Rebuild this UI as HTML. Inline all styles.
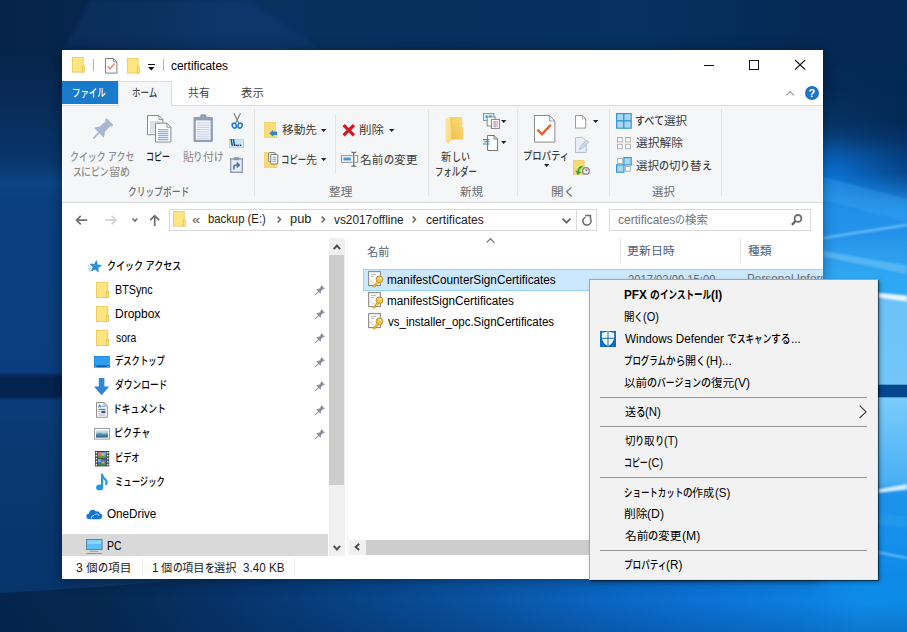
<!DOCTYPE html>
<html lang="ja"><head><meta charset="utf-8"><title>certificates</title>
<style>
html,body{margin:0;padding:0}
body{width:907px;height:632px;overflow:hidden;position:relative;background:#0a3568;font-family:"Liberation Sans","Noto Sans CJK JP",sans-serif;font-size:12px;font-weight:500}
.t{position:absolute;white-space:pre;height:20px;line-height:20px;transform-origin:0 50%;display:block}
.u{display:inline-block;white-space:pre;height:20px;line-height:20px;transform-origin:0 50%;vertical-align:baseline}
.r{position:absolute}
svg{position:absolute;overflow:visible}
#win{position:absolute;left:0;top:0;width:907px;height:632px;clip-path:inset(50px 84px 53px 62px)}
#menu{position:absolute;left:0;top:0;width:907px;height:632px}
</style></head><body>

<svg id="bg" width="907" height="632" viewBox="0 0 907 632" style="position:absolute;left:0;top:0">
<defs>
<linearGradient id="gL" x1="0" y1="0" x2="0" y2="1"><stop offset="0.0000" stop-color="#06244b"/><stop offset="0.0886" stop-color="#06254c"/><stop offset="0.1582" stop-color="#082b58"/><stop offset="0.2532" stop-color="#09356b"/><stop offset="0.2896" stop-color="#0c4484"/><stop offset="0.3165" stop-color="#0a3f7f"/><stop offset="0.5886" stop-color="#0a3d7d"/><stop offset="0.5965" stop-color="#05234f"/><stop offset="0.6266" stop-color="#05234f"/><stop offset="0.6345" stop-color="#0b3c7a"/><stop offset="0.7437" stop-color="#09376f"/><stop offset="0.8544" stop-color="#08356b"/><stop offset="1.0000" stop-color="#07336a"/></linearGradient>
<linearGradient id="gT" x1="0" y1="0" x2="1" y2="0"><stop offset="0.0000" stop-color="#06244b"/><stop offset="0.0684" stop-color="#06254c"/><stop offset="0.1213" stop-color="#07284f"/><stop offset="0.2536" stop-color="#0a3262"/><stop offset="0.3638" stop-color="#08305f"/><stop offset="0.4961" stop-color="#07305f"/><stop offset="0.7056" stop-color="#063161"/><stop offset="0.8600" stop-color="#052b57"/><stop offset="0.8986" stop-color="#052954"/><stop offset="1.0000" stop-color="#052954"/></linearGradient>
<linearGradient id="gB" x1="0" y1="0" x2="1" y2="0"><stop offset="0.0000" stop-color="#04244d"/><stop offset="0.1103" stop-color="#05284f"/><stop offset="0.2536" stop-color="#07336a"/><stop offset="0.3638" stop-color="#073f7f"/><stop offset="0.5006" stop-color="#094f9a"/><stop offset="0.6615" stop-color="#0a64c0"/><stop offset="0.7718" stop-color="#0b71d4"/><stop offset="0.8820" stop-color="#0b7edf"/><stop offset="0.9482" stop-color="#0e8be9"/><stop offset="1.0000" stop-color="#0e8ae8"/></linearGradient>
<linearGradient id="gR" x1="0" y1="0" x2="0" y2="1"><stop offset="0.0000" stop-color="#052954"/><stop offset="0.0886" stop-color="#052954"/><stop offset="0.1424" stop-color="#052c5a"/><stop offset="0.1899" stop-color="#063463"/><stop offset="0.2168" stop-color="#08427f"/><stop offset="0.2421" stop-color="#0a5db0"/><stop offset="0.2674" stop-color="#0b70d4"/><stop offset="0.2801" stop-color="#0c78dc"/><stop offset="0.3165" stop-color="#2090ea"/><stop offset="0.3734" stop-color="#2492ea"/><stop offset="0.3956" stop-color="#2d9bed"/><stop offset="0.4430" stop-color="#2ea8f2"/><stop offset="0.4636" stop-color="#2ea8f2"/><stop offset="0.4747" stop-color="#6cc2f7"/><stop offset="0.6076" stop-color="#72c6f8"/><stop offset="0.6100" stop-color="#03488f"/><stop offset="0.6274" stop-color="#03488f"/><stop offset="0.6297" stop-color="#7accfa"/><stop offset="0.6962" stop-color="#62bef7"/><stop offset="0.7627" stop-color="#49b0f3"/><stop offset="0.7785" stop-color="#1f93ea"/><stop offset="0.8386" stop-color="#1690ec"/><stop offset="0.9177" stop-color="#0d8ae8"/><stop offset="1.0000" stop-color="#0a78d8"/></linearGradient>
<linearGradient id="gRd" x1="0" y1="0" x2="1" y2="0"><stop offset="0" stop-color="#03204a" stop-opacity="0"/><stop offset="1" stop-color="#03204a" stop-opacity="0.55"/></linearGradient>
<linearGradient id="gRm" x1="0" y1="0" x2="0" y2="1"><stop offset="0" stop-color="#fff" stop-opacity="0"/><stop offset="0.4" stop-color="#fff"/><stop offset="0.75" stop-color="#fff"/><stop offset="1" stop-color="#fff" stop-opacity="0"/></linearGradient>
<linearGradient id="gBd" x1="0" y1="0" x2="0" y2="1"><stop offset="0" stop-color="#04204a" stop-opacity="0"/><stop offset="0.5" stop-color="#04204a" stop-opacity="0"/><stop offset="1" stop-color="#04204a" stop-opacity="0.18"/></linearGradient>
<mask id="mR"><rect x="823" y="60" width="84" height="150" fill="url(#gRm)"/></mask>
<filter id="bl" x="-20%" y="-20%" width="140%" height="140%"><feGaussianBlur stdDeviation="0.8"/></filter>
<filter id="bl2" x="-20%" y="-50%" width="140%" height="200%"><feGaussianBlur stdDeviation="2"/></filter>
</defs>
<rect width="907" height="632" fill="#0a3568"/>
<rect x="0" y="0" width="70" height="632" fill="url(#gL)"/>
<rect x="0" y="0" width="907" height="56" fill="url(#gT)"/>
<path d="M60 56 L330 56 L250 0 L90 0 Z" fill="#12427e" opacity="0.28" filter="url(#bl2)"/>
<rect x="823" y="0" width="84" height="632" fill="url(#gR)"/>
<rect x="823" y="60" width="84" height="150" fill="url(#gRd)" mask="url(#mR)"/>
<path d="M0 593 L100 587 L170 581 L170 572 L907 572 L907 632 L0 632 Z" fill="url(#gB)"/>
<rect x="0" y="572" width="907" height="60" fill="url(#gBd)"/>
<g filter="url(#bl)">
<path d="M823 177 L907 199 L907 222 L823 200 Z" fill="#3aa4f2" opacity="0.35"/>
<path d="M823 237 L907 223.7 L907 225.9 L823 239.2 Z" fill="#6cc3f7"/>
<path d="M823 251 L907 265.5 L907 274 L823 256.5 Z" fill="#5ab8f4" opacity="0.9"/>
<path d="M868 291.8 L907 295.7 L907 301.6 L868 296.6 Z" fill="#e8f7ff"/>
<path d="M868 491 L907 484 L907 489.5 L868 494 Z" fill="#d6efff"/>
<path d="M868 549.5 L907 557 L907 559 L868 551.2 Z" fill="#7fd0fa" opacity="0.85"/>
<path d="M868 512 L907 516 L907 528 L868 524 Z" fill="#2e9df0" opacity="0.5"/>
</g>
</svg>

<div class="r" style="left:62px;top:50px;width:761px;height:529px;background:#fff;box-shadow:0 1px 12px rgba(0,0,0,0.4)"></div>
<div id="win">
<div class="r" style="left:62px;top:50px;width:761px;height:529px;background:#fff;"></div>
<div class="r" style="left:62px;top:81px;width:56px;height:22.6px;background:#1979ca;"></div>
<div class="r" style="left:63px;top:105px;width:759px;height:96.5px;background:#f5f6f7;"></div>
<div class="r" style="left:62px;top:104.8px;width:761px;height:1px;background:#dadbdc;"></div>
<div class="r" style="left:62px;top:201.5px;width:761px;height:1px;background:#dadbdc;"></div>
<div class="r" style="left:118px;top:81px;width:54px;height:25px;background:#f5f6f7;border:1px solid #dadbdc;border-bottom:none;box-sizing:border-box"></div>
<div class="r" style="left:254px;top:109px;width:1px;height:87px;background:#e2e3e4;"></div>
<div class="r" style="left:428px;top:109px;width:1px;height:87px;background:#e2e3e4;"></div>
<div class="r" style="left:516.5px;top:109px;width:1px;height:87px;background:#e2e3e4;"></div>
<div class="r" style="left:608.5px;top:109px;width:1px;height:87px;background:#e2e3e4;"></div>
<div class="r" style="left:720.5px;top:109px;width:1px;height:87px;background:#e2e3e4;"></div>
<div class="r" style="left:334.5px;top:115px;width:1px;height:58px;background:#e2e3e4;"></div>
<div class="r" style="left:168.5px;top:209px;width:428px;height:22px;background:#fff;border:1px solid #d9d9d9;box-sizing:border-box"></div>
<div class="r" style="left:576px;top:209px;width:1px;height:22px;background:#d9d9d9;"></div>
<div class="r" style="left:609px;top:209px;width:201.5px;height:22px;background:#fff;border:1px solid #d9d9d9;box-sizing:border-box"></div>
<div class="r" style="left:620px;top:238px;width:1px;height:25px;background:#e5e5e5;"></div>
<div class="r" style="left:739.5px;top:238px;width:1px;height:25px;background:#e5e5e5;"></div>
<div class="r" style="left:328.8px;top:238px;width:16px;height:318px;background:#f0f0f0;"></div>
<div class="r" style="left:328.8px;top:254.8px;width:15.2px;height:230px;background:#cdcdcd;"></div>
<div class="r" style="left:62px;top:534px;width:266px;height:21.6px;background:#d9d9d9;"></div>
<div class="r" style="left:346.6px;top:238px;width:1px;height:318px;background:#f4f4f4;"></div>
<div class="r" style="left:362.8px;top:268.5px;width:461px;height:22px;background:#cce8ff;border:1px solid #99d1ff;box-sizing:border-box;border-right:none"></div>
<div class="r" style="left:349px;top:539.5px;width:474px;height:15.5px;background:#f0f0f0;"></div>
<div class="r" style="left:365.5px;top:539.5px;width:458px;height:15.5px;background:#cdcdcd;"></div>
<div class="r" style="left:141.5px;top:559px;width:1px;height:17px;background:#ececec;"></div>
<div class="r" style="left:294px;top:559px;width:1px;height:17px;background:#ececec;"></div>
<svg style="left:72px;top:57.1px" width="13" height="15.5" viewBox="0 0 13 15.5"><rect x="0.4" y="0.4" width="10.8" height="14.7" fill="#fde681" stroke="#ebc95a" stroke-width="0.8"/><rect x="10.2" y="9" width="2" height="6.1" fill="#fff08a" stroke="#e2ba44" stroke-width="0.8"/></svg>
<div class="r" style="left:93px;top:59.3px;width:1px;height:11.5px;background:#b5b5b5"></div>
<svg style="left:105px;top:58px" width="12.4" height="15.6" viewBox="0 0 12.4 15.6"><path d="M0.5 0.5 H8.5 L11.9 3.9 V15.1 H0.5 Z" fill="#fff" stroke="#7f7f7f" stroke-width="1"/><path d="M8.5 0.5 V3.9 H11.9" fill="none" stroke="#7f7f7f" stroke-width="0.8"/><path d="M2.6 8.4 L5 10.8 L9.6 5.6" fill="none" stroke="#e8764a" stroke-width="1.25"/></svg>
<svg style="left:127px;top:58px" width="13" height="15.5" viewBox="0 0 13 15.5"><rect x="0.4" y="0.4" width="10.8" height="14.7" fill="#fde681" stroke="#ebc95a" stroke-width="0.8"/><rect x="10.2" y="9" width="2" height="6.1" fill="#fff08a" stroke="#e2ba44" stroke-width="0.8"/></svg>
<div class="r" style="left:148px;top:63.6px;width:7px;height:1.2px;background:#111"></div>
<svg style="left:148.2px;top:66.6px" width="6.6" height="3.4" viewBox="0 0 6.6 3.4"><path d="M0 0 H6.6 L3.3 3.4 Z" fill="#111"/></svg>
<div class="r" style="left:163px;top:59.3px;width:1px;height:11.5px;background:#b5b5b5"></div>
<div class="r" style="left:704px;top:64.7px;width:10.2px;height:1.1px;background:#111"></div>
<div class="r" style="left:749px;top:60.2px;width:10px;height:9.7px;border:1.1px solid #111;box-sizing:border-box"></div>
<svg style="left:795px;top:60.2px" width="10.2" height="9.7" viewBox="0 0 10.2 9.7"><path d="M0 0 L10.2 9.7 M10.2 0 L0 9.7" stroke="#111" stroke-width="1.15" fill="none"/></svg>
<svg style="left:785.8px;top:91px" width="8.4" height="4.6" viewBox="0 0 8.4 4.6"><path d="M0.4 4.3 L4.2 0.6 L8 4.3" stroke="#9a9a9a" stroke-width="1.1" fill="none"/></svg>
<div class="r" style="left:804.9px;top:86.2px;width:14px;height:14px;border-radius:7px;background:#1a75c5"></div>
<span class="t" style="left:808.6px;top:83.2px;color:#fff;font-size:11px;font-weight:700">?</span>
<svg style="left:88px;top:112px" width="36" height="32" viewBox="0 0 36 32"><g transform="translate(21 10.6) rotate(45)" fill="#a9b8d0"><rect x="-4.9" y="-1.4" width="9.8" height="2.8" rx="1"/><path d="M-3.2 0.5 H3.2 L3.8 10.5 H-3.8 Z"/><path d="M-4 9.6 H4 L6.6 13.6 Q6.8 14.4 6 14.4 H-6 Q-6.8 14.4 -6.6 13.6 Z"/><rect x="-0.9" y="14" width="1.8" height="8.6" rx="0.8"/></g></svg>
<svg style="left:147px;top:115.3px" width="24.5" height="27.5" viewBox="0 0 24.5 27.5"><path d="M0.5 0.5 H11.9 L15.9 4.5 V19.7 H0.5 Z" fill="#fff" stroke="#8a8a8a" stroke-width="1"/><path d="M11.9 0.5 V4.5 H15.9" fill="none" stroke="#8a8a8a" stroke-width="0.9"/><rect x="3" y="6.5" width="10.4" height="1" fill="#b8c6d6"/><rect x="3" y="8.5" width="10.4" height="1" fill="#b8c6d6"/><rect x="3" y="10.5" width="10.4" height="1" fill="#b8c6d6"/><rect x="3" y="12.5" width="10.4" height="1" fill="#b8c6d6"/><rect x="3" y="14.5" width="10.4" height="1" fill="#b8c6d6"/><rect x="3" y="16.5" width="10.4" height="1" fill="#b8c6d6"/><path d="M8.5 8.2 H19.9 L23.9 12.2 V27 H8.5 Z" fill="#fff" stroke="#8a8a8a" stroke-width="1"/><path d="M19.9 8.2 V12.2 H23.9" fill="none" stroke="#8a8a8a" stroke-width="0.9"/><rect x="11" y="14.2" width="10.4" height="1" fill="#5aa6d6"/><rect x="11" y="16.2" width="10.4" height="1" fill="#5aa6d6"/><rect x="11" y="18.2" width="10.4" height="1" fill="#5aa6d6"/><rect x="11" y="20.2" width="10.4" height="1" fill="#5aa6d6"/><rect x="11" y="22.2" width="10.4" height="1" fill="#5aa6d6"/><rect x="11" y="24.2" width="10.4" height="1" fill="#5aa6d6"/></svg>
<svg style="left:193px;top:114.3px" width="20.4" height="28.5" viewBox="0 0 20.4 28.5"><rect x="0.5" y="3" width="19.4" height="25" rx="1" fill="#8f9fb8"/><rect x="7.2" y="0.3" width="6" height="4.5" rx="1.5" fill="#8f9fb8"/><rect x="5" y="2.8" width="10.4" height="3.2" fill="#8f9fb8"/><rect x="2.8" y="6.4" width="14.8" height="19.4" fill="#f4f5fb"/><rect x="4" y="8.5" width="12.4" height="0.9" fill="#c3cbe2"/><rect x="4" y="10.7" width="12.4" height="0.9" fill="#c3cbe2"/><rect x="4" y="12.9" width="12.4" height="0.9" fill="#c3cbe2"/><rect x="4" y="15.1" width="12.4" height="0.9" fill="#c3cbe2"/><rect x="4" y="17.3" width="12.4" height="0.9" fill="#c3cbe2"/><rect x="4" y="19.5" width="12.4" height="0.9" fill="#c3cbe2"/><rect x="4" y="21.7" width="12.4" height="0.9" fill="#c3cbe2"/><rect x="4" y="23.7" width="12.4" height="0.9" fill="#c3cbe2"/></svg>
<svg style="left:231px;top:112.8px" width="12.4" height="16" viewBox="0 0 12.4 16"><path d="M2.9 0.3 L7.6 9.8 M9.5 0.3 L4.8 9.8" stroke="#84888c" stroke-width="1.3" fill="none"/><ellipse cx="3.3" cy="12.6" rx="2" ry="2.5" fill="none" stroke="#1e7fc8" stroke-width="1.6" transform="rotate(-20 3.3 12.6)"/><ellipse cx="9.1" cy="12.6" rx="2" ry="2.5" fill="none" stroke="#1e7fc8" stroke-width="1.6" transform="rotate(20 9.1 12.6)"/></svg>
<div class="r" style="left:229.2px;top:139.3px;width:14.4px;height:8.3px;background:#cce4f7;box-shadow:inset 0 0 0 0.6px #a8d0f0"></div>
<span class="t" style="left:230.6px;top:133.2px;color:#0a0a0a;font-size:8.5px;font-weight:700;letter-spacing:-0.2px">\\...</span>
<svg style="left:230.2px;top:157px" width="13" height="16" viewBox="0 0 13 16"><rect x="0.7" y="1.9" width="11.6" height="13.4" fill="#e8ecf5" stroke="#8a96b0" stroke-width="1.3"/><rect x="3.6" y="0.2" width="5.8" height="3" rx="0.6" fill="#8a96b0"/><path d="M3.9 12.4 V9.8 Q3.9 8 5.7 8 H8.6 M6.8 5.6 L9.2 8 L6.8 10.4" stroke="#4a6fa8" stroke-width="1.6" fill="none"/></svg>
<svg style="left:264px;top:122.2px" width="13.4" height="15.6" viewBox="0 0 13.4 15.6"><rect x="0.3" y="0.3" width="11" height="15" fill="#f9dc7a" stroke="#f0cd63" stroke-width="0.6"/><rect x="10.6" y="9.4" width="2.2" height="5.9" fill="#fdeeb0" stroke="#e8c04e" stroke-width="0.7"/><path d="M13 9.7 H9.2 V7.9 L5.2 11.3 L9.2 14.7 V12.9 H13 Z" fill="#2f86c9"/></svg>
<svg style="left:320.8px;top:128.8px" width="5.4" height="3" viewBox="0 0 5.4 3"><path d="M0 0 H5.4 L2.7 3 Z" fill="#222"/></svg>
<svg style="left:264px;top:151.9px" width="14.6" height="16.2" viewBox="0 0 14.6 16.2"><rect x="0.3" y="0.3" width="11" height="15.4" fill="#f9dc7a" stroke="#f0cd63" stroke-width="0.6"/><rect x="10.6" y="9.8" width="2.2" height="5.9" fill="#fdeeb0" stroke="#e8c04e" stroke-width="0.7"/><rect x="4.6" y="0.6" width="6.6" height="9" rx="0.8" fill="#fff" stroke="#777" stroke-width="0.9"/><rect x="6.8" y="2.4" width="7" height="9.6" rx="0.8" fill="#fff" stroke="#6a6a6a" stroke-width="0.9"/><rect x="8.4" y="4.8" width="3.8" height="0.9" fill="#4f9fd6"/><rect x="8.4" y="6.8" width="3.8" height="0.9" fill="#4f9fd6"/><rect x="8.4" y="8.8" width="3.8" height="0.9" fill="#4f9fd6"/></svg>
<svg style="left:320.8px;top:158px" width="5.4" height="3" viewBox="0 0 5.4 3"><path d="M0 0 H5.4 L2.7 3 Z" fill="#222"/></svg>
<svg style="left:342px;top:123.6px" width="13.6" height="12.6" viewBox="0 0 13.6 12.6"><path d="M1.6 1.2 L12 11.4 M12 1.2 L1.6 11.4" stroke="#d4191c" stroke-width="3.2" fill="none"/></svg>
<svg style="left:388.6px;top:128.8px" width="5.4" height="3" viewBox="0 0 5.4 3"><path d="M0 0 H5.4 L2.7 3 Z" fill="#222"/></svg>
<svg style="left:340.6px;top:152.3px" width="17.2" height="15" viewBox="0 0 17.2 15"><rect x="0.5" y="3.7" width="16.2" height="6.6" fill="#fff" stroke="#8a8a8a" stroke-width="1"/><rect x="2.4" y="5.5" width="7.4" height="3" fill="#3f97dc"/><rect x="11.6" y="3" width="2.4" height="8" fill="#f5f6f7"/><path d="M10.4 0.2 H11.8 Q12.8 0.3 12.8 1.3 V13.1 Q12.8 14.1 11.8 14.2 H10.4 M15.2 0.2 H13.8 Q12.8 0.3 12.8 1.3 M15.2 14.2 H13.8 Q12.8 14.1 12.8 13.1" stroke="#5a5a5a" stroke-width="1.1" fill="none"/></svg>
<svg style="left:444.5px;top:115.8px" width="18.6" height="28.2" viewBox="0 0 18.6 28.2"><defs><linearGradient id="nf1" x1="0" y1="1" x2="1" y2="0"><stop offset="0" stop-color="#efc047"/><stop offset="1" stop-color="#f9dc80"/></linearGradient><linearGradient id="nf2" x1="0" y1="0" x2="1" y2="1"><stop offset="0" stop-color="#fdeaa6"/><stop offset="1" stop-color="#f8da78"/></linearGradient></defs><path d="M4.4 1 H17.2 V10.4 L18.4 11.4 V23.6 H6 Z" fill="url(#nf1)"/><path d="M0.4 2.6 L5 1 L6.2 23.6 L3.6 28 L0.6 25.4 Z" fill="url(#nf2)"/></svg>
<svg style="left:482.6px;top:113px" width="17" height="16" viewBox="0 0 17 16"><rect x="0.5" y="0.5" width="10.4" height="7" fill="#d4eaf6" stroke="#4a9fd0" stroke-width="0.9"/><rect x="2.6" y="2.6" width="2" height="2" fill="#3b8bc4"/><rect x="6" y="2.6" width="2.6" height="2" fill="#3b8bc4"/><rect x="4.2" y="4" width="8" height="9" fill="#fff" stroke="#8a8a8a" stroke-width="1"/><rect x="8.4" y="6.4" width="8" height="9" fill="#fff" stroke="#808080" stroke-width="1"/><path d="M10 9 H15 M10 11 H15 M10 13 H15" stroke="#c678a0" stroke-width="0.9"/><path d="M12 7.6 V15" stroke="#9ab" stroke-width="0.7"/></svg>
<svg style="left:501.2px;top:119.5px" width="5.4" height="3" viewBox="0 0 5.4 3"><path d="M0 0 H5.4 L2.7 3 Z" fill="#222"/></svg>
<svg style="left:483.4px;top:134.8px" width="15.4" height="16" viewBox="0 0 15.4 16"><path d="M4.6 0.5 H11 L14.6 4 V15.5 H4.6 Z" fill="#fff" stroke="#707070" stroke-width="1"/><path d="M11 0.5 V4 H14.6" fill="none" stroke="#707070" stroke-width="0.9"/><path d="M0 4.6 H6.4 M1.4 6.8 H6.4 M0 9 H6.4" stroke="#2f86c9" stroke-width="1.1"/></svg>
<svg style="left:501.2px;top:141.4px" width="5.4" height="3" viewBox="0 0 5.4 3"><path d="M0 0 H5.4 L2.7 3 Z" fill="#222"/></svg>
<svg style="left:534.2px;top:115.4px" width="21.4" height="27.6" viewBox="0 0 21.4 27.6"><path d="M0.5 0.5 H15.4 L20.9 6 V27.1 H0.5 Z" fill="#fff" stroke="#8c8c8c" stroke-width="1"/><path d="M15.4 0.5 V6 H20.9" fill="none" stroke="#8c8c8c" stroke-width="0.9"/><path d="M3.4 14.6 L8 19.2 L16.8 9.8" fill="none" stroke="#e6642e" stroke-width="2.4"/></svg>
<svg style="left:544.2px;top:163.6px" width="5.4" height="3" viewBox="0 0 5.4 3"><path d="M0 0 H5.4 L2.7 3 Z" fill="#222"/></svg>
<svg style="left:574.8px;top:115.4px" width="11.2" height="13.6" viewBox="0 0 11.2 13.6"><path d="M0.5 0.5 H7.4 L10.7 3.8 V13.1 H0.5 Z" fill="#fff" stroke="#9c9c9c" stroke-width="1"/><path d="M7.4 0.5 V3.8 H10.7" fill="none" stroke="#9c9c9c" stroke-width="0.8"/></svg>
<svg style="left:593px;top:120px" width="5.4" height="3" viewBox="0 0 5.4 3"><path d="M0 0 H5.4 L2.7 3 Z" fill="#222"/></svg>
<svg style="left:574.8px;top:136.8px" width="14.2" height="16" viewBox="0 0 14.2 16"><path d="M0.5 0.5 H7.8 L11.2 3.9 V15.5 H0.5 Z" fill="#e8edf6" stroke="#b4bfd2" stroke-width="1"/><path d="M4.4 12.6 L5.4 9.4 L11.8 3 L13.8 5 L7.4 11.4 Z" fill="#cfd8ea" stroke="#aab6cc" stroke-width="0.7"/></svg>
<svg style="left:572.8px;top:159.8px" width="17.4" height="16.6" viewBox="0 0 17.4 16.6"><rect x="0.5" y="0.7" width="10.6" height="13.5" fill="#f7dc73" stroke="#e6c352" stroke-width="0.7"/><path d="M9.6 5.4 Q4.8 5.8 4.4 10.8 L2 10.2 L4.6 15.2 L8.8 12.2 L6.4 11.5 Q6.8 8 9.8 7.5 Z" fill="#2fa83a" stroke="#f7dc73" stroke-width="0.4"/><circle cx="13" cy="10.9" r="3.3" fill="#ececec" stroke="#808080" stroke-width="1.2"/><path d="M13 8.9 V10.9 L14.4 10" stroke="#555" stroke-width="0.8" fill="none"/></svg>
<svg style="left:616px;top:113.1px" width="15.8" height="15.8" viewBox="0 0 15.8 15.8"><rect x="0.6" y="0.6" width="7.3" height="7.3" fill="#a6d8ef" stroke="#3b97d3" stroke-width="1.2"/><rect x="7.9" y="0.6" width="7.3" height="7.3" fill="#a6d8ef" stroke="#3b97d3" stroke-width="1.2"/><rect x="0.6" y="7.9" width="7.3" height="7.3" fill="#a6d8ef" stroke="#3b97d3" stroke-width="1.2"/><rect x="7.9" y="7.9" width="7.3" height="7.3" fill="#a6d8ef" stroke="#3b97d3" stroke-width="1.2"/></svg>
<svg style="left:617px;top:137.1px" width="14.2" height="12.2" viewBox="0 0 14.2 12.2"><rect x="0.5" y="0.5" width="4.8" height="4.4" fill="#fff" stroke="#b0b0b0" stroke-width="1"/><rect x="8.6" y="0.5" width="4.8" height="4.4" fill="#fff" stroke="#b0b0b0" stroke-width="1"/><rect x="0.5" y="7.3" width="4.8" height="4.4" fill="#fff" stroke="#b0b0b0" stroke-width="1"/><rect x="8.6" y="7.3" width="4.8" height="4.4" fill="#fff" stroke="#b0b0b0" stroke-width="1"/></svg>
<svg style="left:616px;top:157.1px" width="15.8" height="15.8" viewBox="0 0 15.8 15.8"><rect x="1.6" y="1.6" width="4.8" height="4.8" fill="#fff" stroke="#b0b0b0" stroke-width="1"/><rect x="7.9" y="0.6" width="7.3" height="7.3" fill="#a6d8ef" stroke="#3b97d3" stroke-width="1.2"/><rect x="0.6" y="7.9" width="7.3" height="7.3" fill="#a6d8ef" stroke="#3b97d3" stroke-width="1.2"/><rect x="9.4" y="9.4" width="4.8" height="4.8" fill="#fff" stroke="#b0b0b0" stroke-width="1"/></svg>
<svg style="left:75px;top:214.5px" width="12.4" height="10.4" viewBox="0 0 12.4 10.4"><path d="M12.2 5.2 H1.6 M5.8 0.9 L1.5 5.2 L5.8 9.5" stroke="#707070" stroke-width="1.75" fill="none"/></svg>
<svg style="left:104.8px;top:214.5px" width="12.4" height="10.4" viewBox="0 0 12.4 10.4"><path d="M0.2 5.2 H10.8 M6.6 0.9 L10.9 5.2 L6.6 9.5" stroke="#d2d2d2" stroke-width="1.75" fill="none"/></svg>
<svg style="left:131.6px;top:217.8px" width="5.8" height="3.8" viewBox="0 0 5.8 3.8"><path d="M0.5 0.5 L2.9 3 L5.3 0.5" stroke="#707070" stroke-width="1.6" fill="none"/></svg>
<svg style="left:149.4px;top:213.5px" width="11.4" height="12.2" viewBox="0 0 11.4 12.2"><path d="M5.7 12 V1.8 M1.2 6.2 L5.7 1.7 L10.2 6.2" stroke="#707070" stroke-width="1.75" fill="none"/></svg>
<svg style="left:173.2px;top:211px" width="13" height="15.5" viewBox="0 0 13 15.5"><rect x="0.4" y="0.4" width="10.8" height="14.7" fill="#fde681" stroke="#ebc95a" stroke-width="0.8"/><rect x="10.2" y="9" width="2" height="6.1" fill="#fff08a" stroke="#e2ba44" stroke-width="0.8"/></svg>
<svg style="left:277.2px;top:216.2px" width="4.4" height="7.04" viewBox="0 0 5 8"><path d="M0.7 0.7 L4 4 L0.7 7.3" fill="none" stroke="#686868" stroke-width="1.7"/></svg>
<svg style="left:321px;top:216.2px" width="4.4" height="7.04" viewBox="0 0 5 8"><path d="M0.7 0.7 L4 4 L0.7 7.3" fill="none" stroke="#686868" stroke-width="1.7"/></svg>
<svg style="left:412px;top:216.2px" width="4.4" height="7.04" viewBox="0 0 5 8"><path d="M0.7 0.7 L4 4 L0.7 7.3" fill="none" stroke="#686868" stroke-width="1.7"/></svg>
<svg style="left:562.4px;top:218.2px" width="9" height="5.8" viewBox="0 0 9 5.8"><path d="M0.6 0.6 L4.5 4.8 L8.4 0.6" stroke="#666" stroke-width="1.8" fill="none"/></svg>
<svg style="left:581px;top:213px" width="12" height="13" viewBox="0 0 12 13"><path d="M9.85 6.6 A4.1 4.1 0 1 1 4.6 4.15" stroke="#6b6b6b" stroke-width="1.5" fill="none"/><path d="M4.2 2.6 H9.5 V6.8" stroke="#6b6b6b" stroke-width="1.5" fill="none"/></svg>
<svg style="left:790.6px;top:213.8px" width="11.4" height="12" viewBox="0 0 11.4 12"><circle cx="7" cy="4.4" r="3.4" stroke="#6b6b6b" stroke-width="1.8" fill="none"/><path d="M4.6 6.9 L0.9 10.9" stroke="#6b6b6b" stroke-width="2.3" fill="none"/></svg>
<svg style="left:486px;top:237.6px" width="9" height="5" viewBox="0 0 9 5"><path d="M0.5 4.6 L4.5 0.7 L8.5 4.6" stroke="#7a7a7a" stroke-width="1.3" fill="none"/></svg>
<svg style="left:332.6px;top:243.6px" width="7.8" height="6" viewBox="0 0 7.8 6"><path d="M0.7 5.2 L3.9 1.6 L7.1 5.2" stroke="#505050" stroke-width="2" fill="none"/></svg>
<svg style="left:332.6px;top:544.6px" width="7.8" height="6" viewBox="0 0 7.8 6"><path d="M0.7 0.8 L3.9 4.4 L7.1 0.8" stroke="#505050" stroke-width="2" fill="none"/></svg>
<svg style="left:353.6px;top:543.2px" width="6" height="7.8" viewBox="0 0 6 7.8"><path d="M5.2 0.7 L1.6 3.9 L5.2 7.1" stroke="#505050" stroke-width="2" fill="none"/></svg>
<svg style="left:89.4px;top:259.6px" width="13.4" height="12.8" viewBox="0 0 13.4 12.8"><path d="M7.46 0.46 L8.41 4.73 L12.71 5.52 L8.94 7.74 L9.51 12.07 L6.24 9.17 L2.29 11.06 L4.04 7.05 L1.03 3.88 L5.38 4.30 Z" fill="#2492de" stroke="#1b78c4" stroke-width="0.5"/><path d="M-1 5.8 L1.6 6.4 M-1.4 8.4 L2 8.2 M-0.4 11.2 L2.4 10" stroke="#7fc0ee" stroke-width="0.8"/></svg>
<svg style="left:95.8px;top:281.8px" width="13" height="16" viewBox="0 0 13 16"><rect x="0.5" y="0.5" width="11.2" height="15" fill="#fde681" stroke="#ebc95a" stroke-width="0.9"/><rect x="10.6" y="9.4" width="1.9" height="6.1" fill="#fff08a" stroke="#e2ba44" stroke-width="0.8"/></svg>
<svg style="left:95.8px;top:305.8px" width="13" height="16" viewBox="0 0 13 16"><rect x="0.5" y="0.5" width="11.2" height="15" fill="#fde681" stroke="#ebc95a" stroke-width="0.9"/><rect x="10.6" y="9.4" width="1.9" height="6.1" fill="#fff08a" stroke="#e2ba44" stroke-width="0.8"/></svg>
<svg style="left:95.8px;top:329.9px" width="13" height="16" viewBox="0 0 13 16"><rect x="0.5" y="0.5" width="11.2" height="15" fill="#fde681" stroke="#ebc95a" stroke-width="0.9"/><rect x="10.6" y="9.4" width="1.9" height="6.1" fill="#fff08a" stroke="#e2ba44" stroke-width="0.8"/></svg>
<svg style="left:94.3px;top:356.2px" width="15.8" height="11.4" viewBox="0 0 15.8 11.4"><rect x="0" y="0" width="15.8" height="11.4" fill="#1a86e0"/><rect x="0.7" y="0.7" width="14.4" height="8.4" fill="#2f9df0"/><rect x="0" y="9.6" width="15.8" height="1.8" fill="#0f5fa8"/><rect x="1.2" y="10.1" width="1" height="0.8" fill="#fff"/><rect x="13.4" y="10.1" width="1" height="0.8" fill="#fff"/></svg>
<svg style="left:94.4px;top:377.7px" width="15.2" height="17.4" viewBox="0 0 15.2 17.4"><path d="M4.8 0 H10.4 V8.4 H15.2 L7.6 17.2 L0 8.4 H4.8 Z" fill="#2f86d6"/></svg>
<svg style="left:96.2px;top:402px" width="11.8" height="15.8" viewBox="0 0 11.8 15.8"><path d="M0.5 0.5 H8 L11.3 3.8 V15.3 H0.5 Z" fill="#fff" stroke="#8f8f8f" stroke-width="1"/><path d="M8 0.5 V3.8 H11.3" fill="none" stroke="#8f8f8f" stroke-width="0.8"/><path d="M2.4 5.6 L3.7 2.6 L5 5.6 M2.9 4.6 H4.5" stroke="#2f7fd0" stroke-width="0.9" fill="none"/><rect x="5.8" y="3.9" width="3" height="0.9" fill="#3b8bd0"/><rect x="2.4" y="6.8" width="7" height="1.2" fill="#2a8aa6"/><rect x="2.4" y="9" width="2.2" height="1" fill="#e0a050"/><rect x="5.4" y="8.8" width="4" height="2.4" fill="#2d4f70"/><rect x="2.4" y="10.8" width="2.2" height="0.9" fill="#d8b070"/><rect x="2.4" y="12.6" width="7" height="0.9" fill="#9aa4ae"/></svg>
<svg style="left:94.1px;top:428.1px" width="16" height="11.6" viewBox="0 0 16 11.6"><defs><linearGradient id="pic1" x1="0" y1="0" x2="0" y2="1"><stop offset="0" stop-color="#e4eef6"/><stop offset="0.45" stop-color="#9cc0d8"/><stop offset="0.6" stop-color="#4f87a8"/><stop offset="1" stop-color="#2f6382"/></linearGradient></defs><rect x="0.5" y="0.5" width="15" height="10.6" fill="#fff" stroke="#9c9c9c" stroke-width="1"/><rect x="2" y="2" width="12" height="7.6" fill="url(#pic1)"/><path d="M2 6.4 Q5 3.8 8 5.6 T14 5 V7 H2 Z" fill="#5e93ad" opacity="0.8"/></svg>
<svg style="left:95px;top:451px" width="14.2" height="15.4" viewBox="0 0 14.2 15.4"><rect x="0" y="0" width="14.2" height="15.4" fill="#3a3a3a"/><rect x="2.9" y="1" width="8.4" height="6.2" fill="#5b8fd0"/><rect x="2.9" y="1" width="3.6" height="3.4" fill="#d0788c"/><rect x="6.5" y="2.2" width="3" height="3" fill="#e8c23a"/><rect x="2.9" y="4.8" width="8.4" height="2.4" fill="#5a9a4a"/><rect x="8.6" y="1" width="2.7" height="2.6" fill="#6ab0e0"/><rect x="2.9" y="8.2" width="8.4" height="6.2" fill="#3f74c4"/><rect x="2.9" y="8.2" width="3" height="2.6" fill="#7ab8e8"/><rect x="6.8" y="10.6" width="2.6" height="2.6" fill="#e8c23a"/><rect x="2.9" y="12.4" width="8.4" height="2" fill="#4a8a4a"/><rect x="0.7" y="0.9" width="1.4" height="1.7" fill="#f0f0f0"/><rect x="12.1" y="0.9" width="1.4" height="1.7" fill="#f0f0f0"/><rect x="0.7" y="3.8" width="1.4" height="1.7" fill="#f0f0f0"/><rect x="12.1" y="3.8" width="1.4" height="1.7" fill="#f0f0f0"/><rect x="0.7" y="6.8" width="1.4" height="1.7" fill="#f0f0f0"/><rect x="12.1" y="6.8" width="1.4" height="1.7" fill="#f0f0f0"/><rect x="0.7" y="9.8" width="1.4" height="1.7" fill="#f0f0f0"/><rect x="12.1" y="9.8" width="1.4" height="1.7" fill="#f0f0f0"/><rect x="0.7" y="12.7" width="1.4" height="1.7" fill="#f0f0f0"/><rect x="12.1" y="12.7" width="1.4" height="1.7" fill="#f0f0f0"/></svg>
<svg style="left:96px;top:473.6px" width="12" height="17" viewBox="0 0 12 17"><ellipse cx="3.6" cy="13.4" rx="3.5" ry="2.9" fill="#1e9be0"/><path d="M6.1 13.6 V0.6 Q6.6 3.6 9.2 5.4 Q11.6 7.4 9.8 11" stroke="#1e9be0" stroke-width="2.2" fill="none" stroke-linejoin="round"/></svg>
<svg style="left:85.8px;top:508.2px" width="16.6" height="11.4" viewBox="0 0 16.6 11.4"><path d="M3.6 11.2 Q0.2 11 0.3 8 Q0.6 5.8 3 5.4 Q3.4 2.4 6.4 1.8 Q8.8 1.6 10 3.6 Q12.8 2.6 14 5.4 Q16.6 6 16.4 8.6 Q16 11 13.6 11.2 Z" fill="#1277d3"/><path d="M5.2 10.8 Q5 7.6 8 7.4 Q9 5.4 11.4 6 Q13 6.6 13 8" stroke="#fff" stroke-width="0.8" fill="none" opacity="0.85"/></svg>
<svg style="left:85.8px;top:539px" width="16.6" height="15.6" viewBox="0 0 16.6 15.6"><rect x="0.5" y="0.5" width="15.6" height="10" fill="#5cc0f5" stroke="#5b86a8" stroke-width="1"/><rect x="1.4" y="1.4" width="13.8" height="3.6" fill="#8bd5fa"/><rect x="4.2" y="11.8" width="8.2" height="0.9" fill="#8596a6"/><rect x="0.6" y="14" width="15.4" height="1" fill="#8596a6"/></svg>
<svg style="left:313.7px;top:285px" width="11" height="11" viewBox="0 0 11 11"><g transform="rotate(45 5.5 5.5)" fill="#838d98"><rect x="3.2" y="0.5" width="4.6" height="1.4"/><rect x="4" y="1.5" width="3" height="4"/><path d="M2.2 7 L3.8 5.2 H7.2 L8.8 7 Z"/><rect x="5.1" y="7" width="0.9" height="4.5"/></g></svg>
<svg style="left:313.7px;top:309px" width="11" height="11" viewBox="0 0 11 11"><g transform="rotate(45 5.5 5.5)" fill="#838d98"><rect x="3.2" y="0.5" width="4.6" height="1.4"/><rect x="4" y="1.5" width="3" height="4"/><path d="M2.2 7 L3.8 5.2 H7.2 L8.8 7 Z"/><rect x="5.1" y="7" width="0.9" height="4.5"/></g></svg>
<svg style="left:313.7px;top:333px" width="11" height="11" viewBox="0 0 11 11"><g transform="rotate(45 5.5 5.5)" fill="#838d98"><rect x="3.2" y="0.5" width="4.6" height="1.4"/><rect x="4" y="1.5" width="3" height="4"/><path d="M2.2 7 L3.8 5.2 H7.2 L8.8 7 Z"/><rect x="5.1" y="7" width="0.9" height="4.5"/></g></svg>
<svg style="left:313.7px;top:357px" width="11" height="11" viewBox="0 0 11 11"><g transform="rotate(45 5.5 5.5)" fill="#838d98"><rect x="3.2" y="0.5" width="4.6" height="1.4"/><rect x="4" y="1.5" width="3" height="4"/><path d="M2.2 7 L3.8 5.2 H7.2 L8.8 7 Z"/><rect x="5.1" y="7" width="0.9" height="4.5"/></g></svg>
<svg style="left:313.7px;top:381px" width="11" height="11" viewBox="0 0 11 11"><g transform="rotate(45 5.5 5.5)" fill="#838d98"><rect x="3.2" y="0.5" width="4.6" height="1.4"/><rect x="4" y="1.5" width="3" height="4"/><path d="M2.2 7 L3.8 5.2 H7.2 L8.8 7 Z"/><rect x="5.1" y="7" width="0.9" height="4.5"/></g></svg>
<svg style="left:313.7px;top:405px" width="11" height="11" viewBox="0 0 11 11"><g transform="rotate(45 5.5 5.5)" fill="#838d98"><rect x="3.2" y="0.5" width="4.6" height="1.4"/><rect x="4" y="1.5" width="3" height="4"/><path d="M2.2 7 L3.8 5.2 H7.2 L8.8 7 Z"/><rect x="5.1" y="7" width="0.9" height="4.5"/></g></svg>
<svg style="left:313.7px;top:429px" width="11" height="11" viewBox="0 0 11 11"><g transform="rotate(45 5.5 5.5)" fill="#838d98"><rect x="3.2" y="0.5" width="4.6" height="1.4"/><rect x="4" y="1.5" width="3" height="4"/><path d="M2.2 7 L3.8 5.2 H7.2 L8.8 7 Z"/><rect x="5.1" y="7" width="0.9" height="4.5"/></g></svg>
<svg style="left:368px;top:271px" width="15.6" height="16.2" viewBox="0 0 15.6 16.2"><rect x="0.6" y="0.6" width="11.8" height="14" fill="#fbfbfb" stroke="#8c8c8c" stroke-width="1.1"/><path d="M3 3.4 H8 M3 5.4 H6" stroke="#b0b0b0" stroke-width="0.9"/><path d="M0.8 8.2 L6 12 M12 9 L7 13" stroke="#c8c8c8" stroke-width="0.8"/><g transform="translate(0.9 1.1)"><circle cx="10.6" cy="7.2" r="3.4" fill="#f2c544" stroke="#c8932a" stroke-width="1"/><circle cx="11.6" cy="6.2" r="1" fill="#fff7d8"/><path d="M8.2 9.4 L3.8 14.2 L5.4 15.4 L6.6 14.2 L6 13.4 L7.2 12.6 L7.6 13 L10 10.6 Z" fill="#f2c544" stroke="#c8932a" stroke-width="0.8"/></g></svg>
<svg style="left:368px;top:292px" width="15.6" height="16.2" viewBox="0 0 15.6 16.2"><rect x="0.6" y="0.6" width="11.8" height="14" fill="#fbfbfb" stroke="#8c8c8c" stroke-width="1.1"/><path d="M3 3.4 H8 M3 5.4 H6" stroke="#b0b0b0" stroke-width="0.9"/><path d="M0.8 8.2 L6 12 M12 9 L7 13" stroke="#c8c8c8" stroke-width="0.8"/><g transform="translate(0.9 1.1)"><circle cx="10.6" cy="7.2" r="3.4" fill="#f2c544" stroke="#c8932a" stroke-width="1"/><circle cx="11.6" cy="6.2" r="1" fill="#fff7d8"/><path d="M8.2 9.4 L3.8 14.2 L5.4 15.4 L6.6 14.2 L6 13.4 L7.2 12.6 L7.6 13 L10 10.6 Z" fill="#f2c544" stroke="#c8932a" stroke-width="0.8"/></g></svg>
<svg style="left:368px;top:313px" width="15.6" height="16.2" viewBox="0 0 15.6 16.2"><rect x="0.6" y="0.6" width="11.8" height="14" fill="#fbfbfb" stroke="#8c8c8c" stroke-width="1.1"/><path d="M3 3.4 H8 M3 5.4 H6" stroke="#b0b0b0" stroke-width="0.9"/><path d="M0.8 8.2 L6 12 M12 9 L7 13" stroke="#c8c8c8" stroke-width="0.8"/><g transform="translate(0.9 1.1)"><circle cx="10.6" cy="7.2" r="3.4" fill="#f2c544" stroke="#c8932a" stroke-width="1"/><circle cx="11.6" cy="6.2" r="1" fill="#fff7d8"/><path d="M8.2 9.4 L3.8 14.2 L5.4 15.4 L6.6 14.2 L6 13.4 L7.2 12.6 L7.6 13 L10 10.6 Z" fill="#f2c544" stroke="#c8932a" stroke-width="0.8"/></g></svg>
<span id="t0" class="t" style="left:171.30px;top:55.50px;color:#000;transform:scaleX(0.9947);">certificates</span>
<span id="t1" class="t" style="left:72.04px;top:83.20px;color:#fff;font-size:11.4px;transform:scaleX(0.7383);">ファイル</span>
<span id="t2" class="t" style="left:131.73px;top:83.20px;color:#444;font-size:11.4px;transform:scaleX(0.7484);">ホーム</span>
<span id="t3" class="t" style="left:187.80px;top:83.20px;color:#444;font-size:11.4px;font-weight:400;transform:scaleX(0.9573);">共有</span>
<span id="t4" class="t" style="left:240.80px;top:83.20px;color:#444;font-size:11.4px;font-weight:400;transform:scaleX(1.0012);">表示</span>
<span id="t5" class="t" style="left:69.99px;top:147.00px;color:#8c8c8c;font-size:11.4px;transform:scaleX(0.7812);">クイック アクセ</span>
<span id="t6" class="t" style="left:72.70px;top:161.50px;color:#8c8c8c;"><span class="u" style="width:8.77px;font-size:11.4px;transform:scaleX(0.7686)">ス</span><span class="u" style="width:10.02px;font-size:11.4px;transform:scaleX(0.8785)">に</span><span class="u" style="width:17.52px;font-size:11.4px;transform:scaleX(0.7686)">ピン</span><span class="u" style="width:11.50px;font-size:11.4px;font-weight:400;transform:scaleX(1.0082)">留</span><span class="u" style="width:10.02px;font-size:11.4px;transform:scaleX(0.8785)">め</span></span>
<span id="t7" class="t" style="left:145.78px;top:147.00px;color:#1e1e1e;font-size:11.4px;transform:scaleX(0.7053);">コピー</span>
<span id="t8" class="t" style="left:182.60px;top:147.00px;color:#8c8c8c;"><span class="u" style="width:10.88px;font-size:11.4px;font-weight:400;transform:scaleX(0.9536)">貼</span><span class="u" style="width:9.48px;font-size:11.4px;transform:scaleX(0.8309)">り</span><span class="u" style="width:10.88px;font-size:11.4px;font-weight:400;transform:scaleX(0.9536)">付</span><span class="u" style="width:9.48px;font-size:11.4px;transform:scaleX(0.8309)">け</span></span>
<span id="t9" class="t" style="left:128.00px;top:181.50px;color:#6d6d6d;font-size:11.4px;transform:scaleX(0.7700);">クリップボード</span>
<span id="t10" class="t" style="left:281.50px;top:120.00px;color:#3c3c3c;font-size:11.4px;font-weight:400;transform:scaleX(1.0249);">移動先</span>
<span id="t11" class="t" style="left:280.54px;top:150.00px;color:#3c3c3c;"><span class="u" style="width:25.23px;font-size:11.4px;transform:scaleX(0.7379)">コピー</span><span class="u" style="width:11.04px;font-size:11.4px;font-weight:400;transform:scaleX(0.9679)">先</span></span>
<span id="t12" class="t" style="left:358.91px;top:120.00px;color:#3c3c3c;font-size:11.4px;font-weight:400;transform:scaleX(1.1018);">削除</span>
<span id="t13" class="t" style="left:360.30px;top:150.00px;color:#3c3c3c;"><span class="u" style="width:23.31px;font-size:11.4px;font-weight:400;transform:scaleX(1.0226)">名前</span><span class="u" style="width:10.16px;font-size:11.4px;transform:scaleX(0.8910)">の</span><span class="u" style="width:23.31px;font-size:11.4px;font-weight:400;transform:scaleX(1.0226)">変更</span></span>
<span id="t14" class="t" style="left:328.70px;top:181.50px;color:#6d6d6d;font-size:11.4px;font-weight:400;transform:scaleX(1.0232);">整理</span>
<span id="t15" class="t" style="left:441.40px;top:147.00px;color:#3c3c3c;"><span class="u" style="width:10.30px;font-size:11.4px;font-weight:400;transform:scaleX(0.9027)">新</span><span class="u" style="width:17.93px;font-size:11.4px;transform:scaleX(0.7865)">しい</span></span>
<span id="t16" class="t" style="left:434.95px;top:161.50px;color:#3c3c3c;font-size:11.4px;transform:scaleX(0.7352);">フォルダー</span>
<span id="t17" class="t" style="left:459.70px;top:181.50px;color:#6d6d6d;font-size:11.4px;font-weight:400;transform:scaleX(1.0144);">新規</span>
<span id="t18" class="t" style="left:522.53px;top:146.20px;color:#3c3c3c;font-size:11.4px;transform:scaleX(0.8207);">プロパティ</span>
<span id="t19" class="t" style="left:551.21px;top:181.50px;color:#6d6d6d;"><span class="u" style="width:12.61px;font-size:11.4px;font-weight:400;transform:scaleX(1.1054)">開</span><span class="u" style="width:10.99px;font-size:11.4px;transform:scaleX(0.9631)">く</span></span>
<span id="t20" class="t" style="left:634.50px;top:111.20px;color:#3c3c3c;"><span class="u" style="width:29.08px;font-size:11.4px;transform:scaleX(0.8835)">すべて</span><span class="u" style="width:23.12px;font-size:11.4px;font-weight:400;transform:scaleX(1.0140)">選択</span></span>
<span id="t21" class="t" style="left:635.50px;top:133.20px;color:#3c3c3c;font-size:11.4px;font-weight:400;transform:scaleX(1.0298);">選択解除</span>
<span id="t22" class="t" style="left:635.50px;top:155.50px;color:#3c3c3c;"><span class="u" style="width:23.12px;font-size:11.4px;font-weight:400;transform:scaleX(1.0140)">選択</span><span class="u" style="width:10.08px;font-size:11.4px;transform:scaleX(0.8835)">の</span><span class="u" style="width:11.57px;font-size:11.4px;font-weight:400;transform:scaleX(1.0140)">切</span><span class="u" style="width:10.08px;font-size:11.4px;transform:scaleX(0.8835)">り</span><span class="u" style="width:11.57px;font-size:11.4px;font-weight:400;transform:scaleX(1.0140)">替</span><span class="u" style="width:10.08px;font-size:11.4px;transform:scaleX(0.8835)">え</span></span>
<span id="t23" class="t" style="left:652.00px;top:181.80px;color:#6d6d6d;font-size:11.4px;font-weight:400;transform:scaleX(1.0012);">選択</span>
<span id="t24" class="t" style="left:192.30px;top:209.70px;color:#555;transform:scaleX(1.2167);">«</span>
<span id="t25" class="t" style="left:207.96px;top:208.50px;color:#1e1e1e;transform:scaleX(0.9417);">backup (E:)</span>
<span id="t26" class="t" style="left:289.63px;top:208.50px;color:#1e1e1e;transform:scaleX(1.0684);">pub</span>
<span id="t27" class="t" style="left:333.90px;top:210.00px;color:#1e1e1e;transform:scaleX(0.9871);">vs2017offline</span>
<span id="t28" class="t" style="left:426.00px;top:210.00px;color:#1e1e1e;transform:scaleX(1.0088);">certificates</span>
<span id="t29" class="t" style="left:618.00px;top:210.20px;color:#757575;font-weight:400;"><span class="u" style="width:57.36px;transform:scaleX(1.0000)">certificates</span><span class="u" style="width:10.04px;font-size:11.4px;transform:scaleX(0.8800)">の</span><span class="u" style="width:23.02px;font-size:11.4px;transform:scaleX(1.0100)">検索</span></span>
<span id="t30" class="t" style="left:367.00px;top:241.50px;color:#4c607a;font-size:11.4px;font-weight:400;transform:scaleX(0.9793);">名前</span>
<span id="t31" class="t" style="left:626.86px;top:241.20px;color:#4c607a;font-size:11.4px;font-weight:400;transform:scaleX(1.0482);">更新日時</span>
<span id="t32" class="t" style="left:747.50px;top:241.20px;color:#4c607a;font-size:11.4px;font-weight:400;transform:scaleX(1.0232);">種類</span>
<span id="t33" class="t" style="left:106.97px;top:256.20px;color:#000;font-size:11.4px;transform:scaleX(0.7917);">クイック アクセス</span>
<span id="t34" class="t" style="left:115.10px;top:279.80px;color:#000;transform:scaleX(0.8951);">BTSync</span>
<span id="t35" class="t" style="left:115.00px;top:303.70px;color:#000;transform:scaleX(1.0000);">Dropbox</span>
<span id="t36" class="t" style="left:116.00px;top:327.50px;color:#000;transform:scaleX(0.8625);">sora</span>
<span id="t37" class="t" style="left:115.30px;top:351.30px;color:#000;font-size:11.4px;transform:scaleX(0.7293);">デスクトップ</span>
<span id="t38" class="t" style="left:115.30px;top:375.10px;color:#000;font-size:11.4px;transform:scaleX(0.7656);">ダウンロード</span>
<span id="t39" class="t" style="left:113.29px;top:399.00px;color:#000;font-size:11.4px;transform:scaleX(0.7731);">ドキュメント</span>
<span id="t40" class="t" style="left:114.26px;top:423.20px;color:#000;font-size:11.4px;transform:scaleX(0.7980);">ピクチャ</span>
<span id="t41" class="t" style="left:115.07px;top:448.00px;color:#000;font-size:11.4px;transform:scaleX(0.7176);">ビデオ</span>
<span id="t42" class="t" style="left:115.05px;top:471.70px;color:#000;font-size:11.4px;transform:scaleX(0.7323);">ミュージック</span>
<span id="t43" class="t" style="left:107.30px;top:503.70px;color:#000;transform:scaleX(0.9740);">OneDrive</span>
<span id="t44" class="t" style="left:106.93px;top:535.80px;color:#000;transform:scaleX(0.8667);">PC</span>
<span id="t45" class="t" style="left:387.02px;top:270.00px;color:#000;transform:scaleX(0.9807);">manifestCounterSignCertificates</span>
<span id="t46" class="t" style="left:387.02px;top:291.00px;color:#000;transform:scaleX(0.9813);">manifestSignCertificates</span>
<span id="t47" class="t" style="left:388.00px;top:312.00px;color:#000;transform:scaleX(0.9578);">vs_installer_opc.SignCertificates</span>
<span id="t48" class="t" style="left:628.00px;top:270.00px;color:#6d6d6d;transform:scaleX(0.9355);">2017/02/09 15:09</span>
<span id="t49" class="t" style="left:746.52px;top:268.50px;color:#6d6d6d;transform:scaleX(0.9819);">Personal Information Exchange</span>
<span id="t50" class="t" style="left:76.00px;top:558.10px;color:#1e1e1e;"><span class="u" style="width:10.15px;transform:scaleX(1.0132)">3 </span><span class="u" style="width:11.67px;font-size:11.4px;font-weight:400;transform:scaleX(1.0233)">個</span><span class="u" style="width:10.17px;font-size:11.4px;transform:scaleX(0.8916)">の</span><span class="u" style="width:23.33px;font-size:11.4px;font-weight:400;transform:scaleX(1.0233)">項目</span></span>
<span id="t51" class="t" style="left:151.73px;top:558.10px;color:#1e1e1e;"><span class="u" style="width:9.73px;transform:scaleX(0.9711)">1 </span><span class="u" style="width:11.19px;font-size:11.4px;font-weight:400;transform:scaleX(0.9808)">個</span><span class="u" style="width:9.75px;font-size:11.4px;transform:scaleX(0.8546)">の</span><span class="u" style="width:22.36px;font-size:11.4px;font-weight:400;transform:scaleX(0.9808)">項目</span><span class="u" style="width:9.75px;font-size:11.4px;transform:scaleX(0.8546)">を</span><span class="u" style="width:28.57px;font-size:11.4px;font-weight:400;transform:scaleX(0.9808)">選択  </span><span class="u" style="width:41.47px;transform:scaleX(0.9711)">3.40 KB</span></span>
</div>
<div id="menu">
<div class="r" style="left:589px;top:279px;width:288.5px;height:301px;background:#f2f2f2;border:1px solid #a6a6a6;border-right-color:#e4e4e4;border-bottom-color:#e4e4e4;box-sizing:border-box;box-shadow:1px 1px 1px rgba(0,0,0,0.45),2px 2px 4px rgba(0,0,0,0.35)"></div>
<div class="r" style="left:600px;top:397px;width:267px;height:1px;background:#959595;"></div>
<div class="r" style="left:600px;top:426px;width:267px;height:1px;background:#959595;"></div>
<div class="r" style="left:600px;top:477px;width:267px;height:1px;background:#959595;"></div>
<div class="r" style="left:600px;top:550px;width:267px;height:1px;background:#959595;"></div>
<svg style="left:600px;top:331px" width="16" height="16" viewBox="0 0 16 16"><rect width="16" height="16" fill="#0f6cc0"/><path d="M1.8 1.8 Q5 1.6 8 0.6 Q11 1.6 14.2 1.8 V7 Q13.6 12 8 15.2 Q2.4 12 1.8 7 Z" fill="#eaf8ff"/><path d="M8 0.6 V15.2 M1.4 7.3 H14.6" stroke="#1a5f86" stroke-width="0.9"/></svg>
<svg style="left:859.4px;top:404.6px" width="8" height="13.6" viewBox="0 0 8 13.6"><path d="M0.7 0.6 L7 6.8 L0.7 13" stroke="#3c3c3c" stroke-width="1.1" fill="none"/></svg>
<span id="t52" class="t" style="left:623.72px;top:285.40px;color:#000;font-weight:700;"><span class="u" style="width:26.03px;transform:scaleX(0.9758)">PFX </span><span class="u" style="width:9.79px;font-size:11.4px;transform:scaleX(0.8587)">の</span><span class="u" style="width:51.18px;font-size:11.4px;transform:scaleX(0.7513)">インストール</span><span class="u" style="width:11.05px;transform:scaleX(0.9758)">(I)</span></span>
<span id="t53" class="t" style="left:623.79px;top:306.50px;color:#000;"><span class="u" style="width:10.52px;font-size:11.4px;font-weight:400;transform:scaleX(0.9223)">開</span><span class="u" style="width:9.17px;font-size:11.4px;transform:scaleX(0.8036)">く</span><span class="u" style="width:15.82px;transform:scaleX(0.9132)">(O)</span></span>
<span id="t54" class="t" style="left:624.70px;top:329.20px;color:#000;"><span class="u" style="width:102.20px;transform:scaleX(0.9760)">Windows Defender </span><span class="u" style="width:9.80px;font-size:11.4px;transform:scaleX(0.8589)">で</span><span class="u" style="width:34.25px;font-size:11.4px;transform:scaleX(0.7515)">スキャン</span><span class="u" style="width:19.58px;font-size:11.4px;transform:scaleX(0.8589)">する</span><span class="u" style="width:9.78px;transform:scaleX(0.9760)">...</span></span>
<span id="t55" class="t" style="left:623.74px;top:350.50px;color:#000;"><span class="u" style="width:41.94px;font-size:11.4px;transform:scaleX(0.7406)">プログラム</span><span class="u" style="width:19.30px;font-size:11.4px;transform:scaleX(0.8464)">から</span><span class="u" style="width:11.08px;font-size:11.4px;font-weight:400;transform:scaleX(0.9714)">開</span><span class="u" style="width:9.65px;font-size:11.4px;transform:scaleX(0.8464)">く</span><span class="u" style="width:25.65px;transform:scaleX(0.9618)">(H)...</span></span>
<span id="t56" class="t" style="left:623.69px;top:373.20px;color:#000;"><span class="u" style="width:23.21px;font-size:11.4px;font-weight:400;transform:scaleX(1.0181)">以前</span><span class="u" style="width:10.12px;font-size:11.4px;transform:scaleX(0.8871)">の</span><span class="u" style="width:44.04px;font-size:11.4px;transform:scaleX(0.7762)">バージョン</span><span class="u" style="width:10.12px;font-size:11.4px;transform:scaleX(0.8871)">の</span><span class="u" style="width:23.21px;font-size:11.4px;font-weight:400;transform:scaleX(1.0181)">復元</span><span class="u" style="width:16.13px;transform:scaleX(1.0081)">(V)</span></span>
<span id="t57" class="t" style="left:624.70px;top:402.00px;color:#000;"><span class="u" style="width:11.00px;font-size:11.4px;font-weight:400;transform:scaleX(0.9648)">送</span><span class="u" style="width:9.59px;font-size:11.4px;transform:scaleX(0.8406)">る</span><span class="u" style="width:15.93px;transform:scaleX(0.9553)">(N)</span></span>
<span id="t58" class="t" style="left:624.70px;top:431.20px;color:#000;"><span class="u" style="width:10.51px;font-size:11.4px;font-weight:400;transform:scaleX(0.9212)">切</span><span class="u" style="width:9.15px;font-size:11.4px;transform:scaleX(0.8026)">り</span><span class="u" style="width:10.51px;font-size:11.4px;font-weight:400;transform:scaleX(0.9212)">取</span><span class="u" style="width:9.15px;font-size:11.4px;transform:scaleX(0.8026)">り</span><span class="u" style="width:13.98px;transform:scaleX(0.9121)">(T)</span></span>
<span id="t59" class="t" style="left:623.80px;top:452.70px;color:#000;"><span class="u" style="width:23.82px;font-size:11.4px;transform:scaleX(0.6967)">コピー</span><span class="u" style="width:15.08px;transform:scaleX(0.9048)">(C)</span></span>
<span id="t60" class="t" style="left:623.74px;top:482.50px;color:#000;"><span class="u" style="width:59.10px;font-size:11.4px;transform:scaleX(0.7410)">ショートカット</span><span class="u" style="width:9.66px;font-size:11.4px;transform:scaleX(0.8469)">の</span><span class="u" style="width:22.16px;font-size:11.4px;font-weight:400;transform:scaleX(0.9720)">作成</span><span class="u" style="width:15.40px;transform:scaleX(0.9624)">(S)</span></span>
<span id="t61" class="t" style="left:623.68px;top:504.20px;color:#000;"><span class="u" style="width:23.45px;font-size:11.4px;font-weight:400;transform:scaleX(1.0286)">削除</span><span class="u" style="width:16.98px;transform:scaleX(1.0184)">(D)</span></span>
<span id="t62" class="t" style="left:624.70px;top:526.30px;color:#000;"><span class="u" style="width:23.43px;font-size:11.4px;font-weight:400;transform:scaleX(1.0277)">名前</span><span class="u" style="width:10.21px;font-size:11.4px;transform:scaleX(0.8955)">の</span><span class="u" style="width:23.43px;font-size:11.4px;font-weight:400;transform:scaleX(1.0277)">変更</span><span class="u" style="width:18.32px;transform:scaleX(1.0176)">(M)</span></span>
<span id="t63" class="t" style="left:623.72px;top:554.70px;color:#000;"><span class="u" style="width:42.53px;font-size:11.4px;transform:scaleX(0.7556)">プロパティ</span><span class="u" style="width:16.36px;transform:scaleX(0.9814)">(R)</span></span>
</div>
</body></html>
